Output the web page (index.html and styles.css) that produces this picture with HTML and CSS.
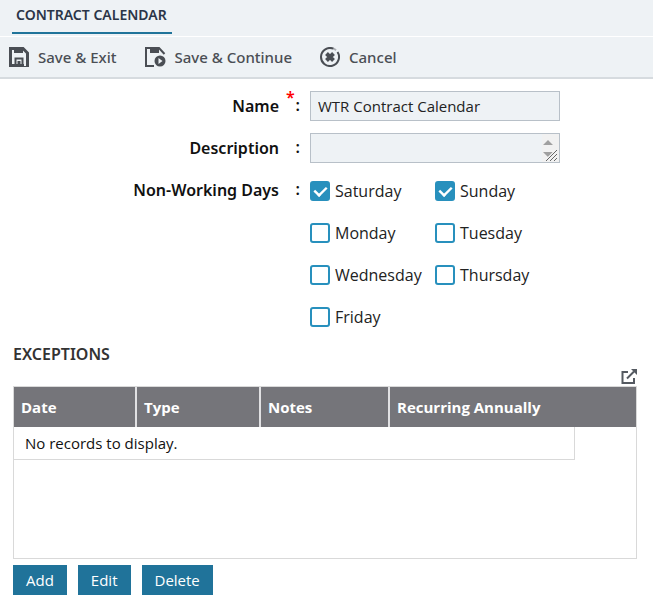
FILE: index.html
```html
<!DOCTYPE html>
<html lang="en">
<head>
<meta charset="utf-8">
<title>Contract Calendar</title>
<link rel="stylesheet" href="styles.css">
</head>
<body>
<header class="top">
  <nav class="tabs"><a class="tab" href="#calendar">CONTRACT CALENDAR</a></nav>
  <div class="toolbar">
    <button class="tool" type="submit" form="calendar">
      <svg class="icon" viewBox="0 0 20 20" fill="none" stroke="currentColor"><path d="M15 18.500H1.500V1.500H14L18.500 6V20" stroke-width="3"/><path d="M5 1h9v5H5z" fill="currentColor" stroke="none"/><path d="M6.500 18V11.500H13.500V18" stroke-width="2"/><path d="M8.500 14h3v3h-3z" fill="currentColor" stroke="none"/><path d="M15 19.500H20"/></svg>
      Save &amp; Exit
    </button>
    <button class="tool" type="button">
      <svg class="icon icon-wide" viewBox="0 0 21 20" fill="none" stroke="currentColor" stroke-width="2"><path d="M9 19H1V1H14L19.500 7"/><path d="M5 1h9v5H5z" fill="currentColor" stroke="none"/><circle cx="15" cy="14" r="5.500" fill="currentColor" stroke="none"/><path d="M13.500 11v6l4-3z" fill="#eef2f5" stroke="none"/></svg>
      Save &amp; Continue
    </button>
    <button class="tool" type="button">
      <svg class="icon" viewBox="0 0 20 20" fill="none" stroke="currentColor"><path d="M13.500 1.700A9 9 0 1 0 17.500 5" stroke-width="2"/><path d="M13.500 1.700A9 9 0 0 1 16 3.300" stroke-width="2" stroke-opacity=".4"/><path d="M6.500 6.500l7 7m0-7l-7 7" stroke-width="4"/></svg>
      Cancel
    </button>
  </div>
</header>
<main>
  <form class="form" id="calendar">
    <label class="label" for="name">Name</label>
    <span class="colon"><span class="star">*</span>:</span>
    <input class="field" id="name" type="text" value="WTR Contract Calendar" required>

    <label class="label" for="description">Description</label>
    <span class="colon">:</span>
    <div class="area">
      <textarea class="field" id="description"></textarea>
      <svg class="scroller" viewBox="0 0 17 28" aria-hidden="true"><path fill="#f1f1f1" d="M0 0h17v28H0z"/><path fill="#a0a0a0" d="M1 11l5-5 5 5zM1 18h10l-5 5z"/><path d="M4 27L15 16M8 27l7-7M12 27l3-3" stroke="#f1f1f1" stroke-width="3"/><path d="M4 27L15 16M8 27l7-7M12 27l3-3" stroke="#666"/></svg>
    </div>

    <span class="label" id="days-label">Non-Working Days</span>
    <span class="colon">:</span>
    <div class="days" role="group" aria-labelledby="days-label">
      <label class="day"><input type="checkbox" checked>Saturday</label>
      <label class="day"><input type="checkbox" checked>Sunday</label>
      <label class="day"><input type="checkbox">Monday</label>
      <label class="day"><input type="checkbox">Tuesday</label>
      <label class="day"><input type="checkbox">Wednesday</label>
      <label class="day"><input type="checkbox">Thursday</label>
      <label class="day"><input type="checkbox">Friday</label>
    </div>
  </form>

  <section class="exceptions">
    <h2 class="title">EXCEPTIONS</h2>
    <div class="expand-row">
      <button class="expand" type="button" aria-label="Open in new window">
        <svg viewBox="0 0 16 16" width="16" height="16" fill="none" stroke="currentColor" stroke-width="2"><path d="M7 3H1.500V14H13V9"/><path d="M6 9.500L13 2.500"/><path d="M10 0h6v6z" fill="currentColor" stroke="none"/></svg>
      </button>
    </div>
    <div class="grid">
      <table class="table">
        <colgroup><col class="c-date"><col class="c-type"><col class="c-notes"><col class="c-recurring"><col class="c-rest"></colgroup>
        <thead><tr><th>Date</th><th>Type</th><th>Notes</th><th colspan="2">Recurring Annually</th></tr></thead>
        <tbody><tr><td class="empty" colspan="4">No records to display.</td><td></td></tr></tbody>
      </table>
    </div>
    <div class="actions">
      <button class="action" type="button">Add</button>
      <button class="action" type="button">Edit</button>
      <button class="action" type="button">Delete</button>
    </div>
  </section>
</main>
</body>
</html>
```
FILE: styles.css
```css
* { box-sizing: border-box; }

body {
  margin: 0;
  background: #fff;
  color: #222;
  font: 16px/20px "Open Sans", "Noto Sans", sans-serif;
}

button, input, textarea { font: inherit; color: inherit; }

button { border: 0; padding: 0; background: none; }

.tab, .tool, .label, .colon, .title { font-family: "Noto Sans", "Open Sans", sans-serif; }

.top {
  background: #eef2f5;
  border-bottom: 2px solid #d6dbdf;
}

.tabs {
  display: flex;
  padding-left: 12px;
  height: 37px;
  border-bottom: 1px solid #fff;
}

.tab {
  height: 34px;
  padding: 5px 5px 0 4px;
  border-bottom: 2px solid #20749a;
  color: #2b3548;
  font-size: 14px;
  font-weight: 600;
  text-decoration: none;
}

.toolbar {
  display: flex;
  align-items: center;
  gap: 28px;
  height: 40px;
  padding-left: 9px;
}

.tool {
  display: flex;
  align-items: center;
  gap: 9px;
  color: #4a4e54;
  font-size: 15px;
  font-weight: 500;
  white-space: nowrap;
}

.icon { width: 20px; height: 20px; }

.icon-wide { width: 21px; }

.form {
  display: grid;
  grid-template-columns: 279px 21px minmax(0, 250px);
  column-gap: 0;
  row-gap: 12px;
  padding-top: 12px;
}

.form > :nth-child(3n) { margin-left: 10px; width: 100%; }

.label {
  padding-top: 5px;
  color: #111;
  font-weight: 600;
  text-align: right;
}

.colon {
  position: relative;
  padding-top: 4px;
  color: #111;
  font-weight: 600;
  text-align: right;
}

.star {
  position: absolute;
  left: 7px;
  top: -4px;
  color: #f00;
}

.field {
  display: block;
  width: 100%;
  height: 30px;
  padding: 0 7px;
  border: 1px solid #b8c0c8;
  border-radius: 0;
  background: #eef2f5;
  font-size: 15px;
  resize: none;
  outline: 0;
}

.area { position: relative; }

.area .field { overflow: hidden; }

.scroller {
  position: absolute;
  right: 1px;
  top: 1px;
  width: 17px;
  height: 28px;
}

.days {
  display: grid;
  grid-template-columns: 1fr 1fr;
  row-gap: 22px;
  padding-top: 6px;
}

.day {
  display: flex;
  align-items: center;
  gap: 5px;
  height: 20px;
  white-space: nowrap;
}

.day input {
  appearance: none;
  flex: none;
  width: 20px;
  height: 20px;
  margin: 0;
  border: 2px solid #2890bd;
  border-radius: 3px;
  background: #fff;
}

.day input:checked {
  display: grid;
  place-items: center;
  background: #2890bd;
}

.day input:checked::before {
  content: "";
  width: 12px;
  height: 7px;
  border: solid #fff;
  border-width: 0 0 3px 3px;
  transform: translateY(-1px) rotate(-45deg) scale(0.8);
}

.exceptions { padding: 17px 16px 0 13px; }

.title {
  margin: 0;
  color: #333;
  font-size: 16px;
  font-weight: 600;
  line-height: 20px;
}

.expand-row {
  display: flex;
  justify-content: flex-end;
  height: 22px;
  padding-top: 5px;
}

.expand { height: 16px; color: #555a61; }

.expand svg { display: block; }

.grid {
  height: 173px;
  border: 1px solid #d9d9d9;
}

.table {
  width: 100%;
  border-collapse: separate;
  border-spacing: 0;
  table-layout: fixed;
  font-size: 15px;
}

.c-date { width: 123px; }
.c-type { width: 124px; }
.c-notes { width: 129px; }
.c-recurring { width: 185px; }

.table th {
  height: 40px;
  padding: 0 7px;
  border-right: 2px solid #e1e1e3;
  background: #75757a;
  color: #fff;
  font-weight: 700;
  text-align: left;
}

.table th:last-child { border-right: 0; }

.table td { height: 33px; padding: 0; color: #111; }

.table .empty {
  padding: 0 11px;
  border-right: 1px solid #d9d9d9;
  border-bottom: 1px solid #d9d9d9;
}

.actions {
  display: flex;
  gap: 11px;
  padding-top: 6px;
}

.action {
  height: 30px;
  padding: 0 13px;
  background: #20739a;
  color: #fff;
  font-size: 15px;
}
```
